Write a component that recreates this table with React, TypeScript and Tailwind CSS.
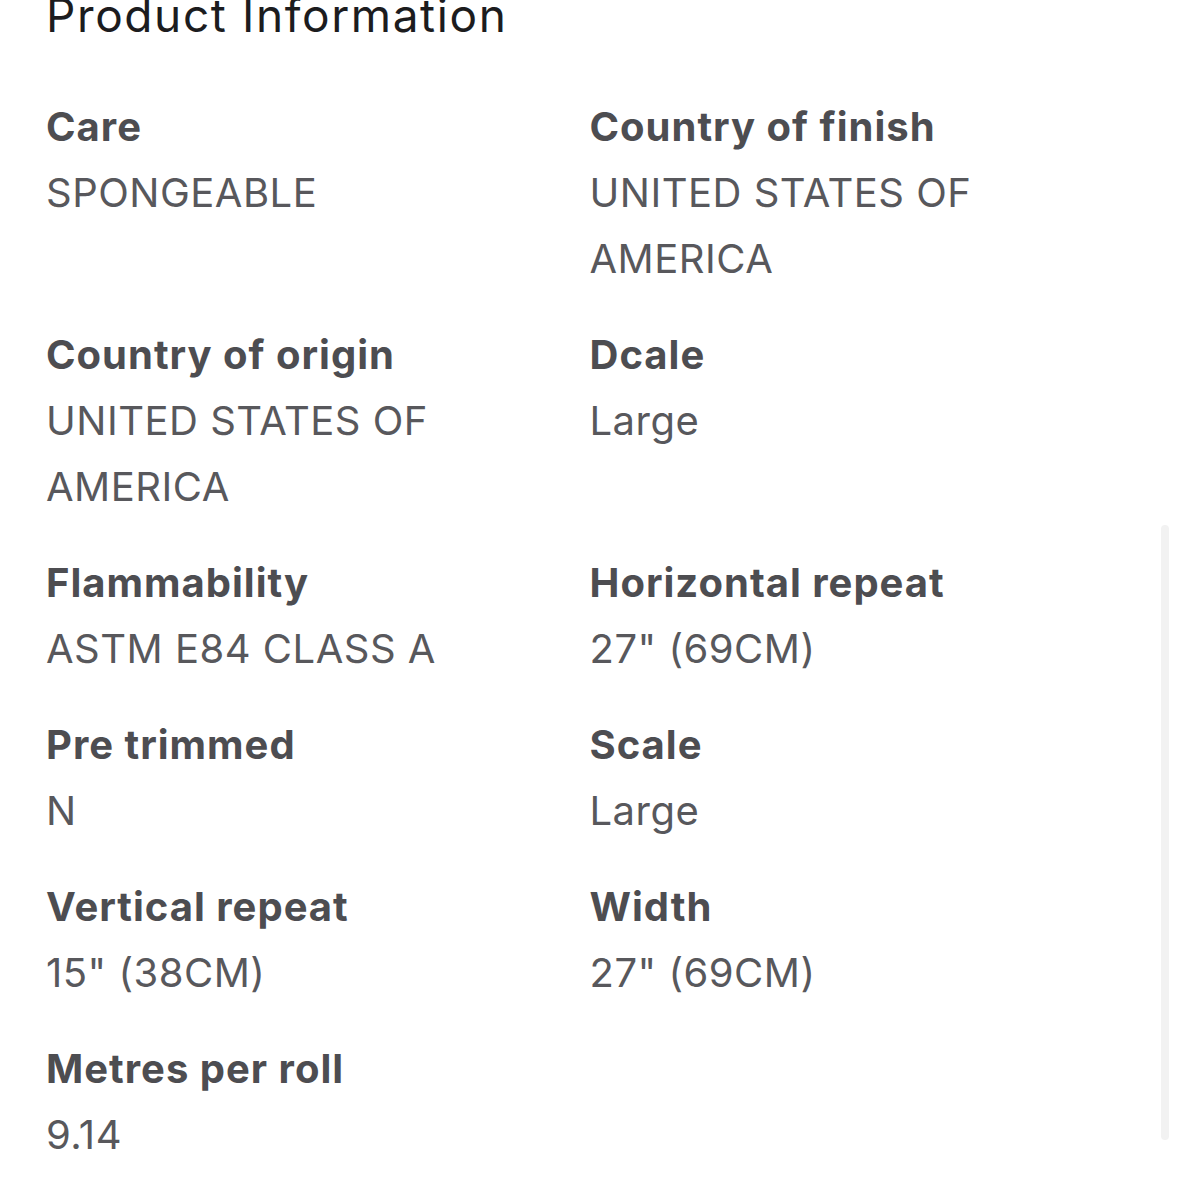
const rows: [string, string][] = [
  ["Care", "SPONGEABLE"],
  ["Country of finish", "UNITED STATES OF AMERICA"],
  ["Country of origin", "UNITED STATES OF AMERICA"],
  ["Dcale", "Large"],
  ["Flammability", "ASTM E84 CLASS A"],
  ["Horizontal repeat", '27" (69CM)'],
  ["Pre trimmed", "N"],
  ["Scale", "Large"],
  ["Vertical repeat", '15" (38CM)'],
  ["Width", '27" (69CM)'],
  ["Metres per roll", "9.14"],
];

function Field({ label, value }: { label: string; value: string }) {
  return (
    <div className="pr-4">
      <div className="text-[40px] leading-[66px] font-bold tracking-[1px] text-[#4d4d51]">{label}</div>
      <div className="text-[40px] leading-[66px] tracking-[0.5px] text-[#58585c]">{value}</div>
    </div>
  );
}

export default function App() {
  return (
    <div className="relative h-[1179px] w-[1179px] overflow-hidden bg-white font-['Inter',sans-serif]">
      <div className="px-[46px]">
        <h2 className="-mt-[15px] text-[46px] leading-[60px] font-normal tracking-[1.6px] text-[#1c1c1e]">Product Information</h2>
        <div className="mt-[49px] grid grid-cols-2 gap-y-[30px]">
          {rows.map(([l, v]) => (
            <Field key={l} label={l} value={v} />
          ))}
        </div>
      </div>
      <div className="absolute right-[10px] top-[525px] h-[615px] w-[8px] rounded-full bg-[#f2f2f2]" />
    </div>
  );
}
